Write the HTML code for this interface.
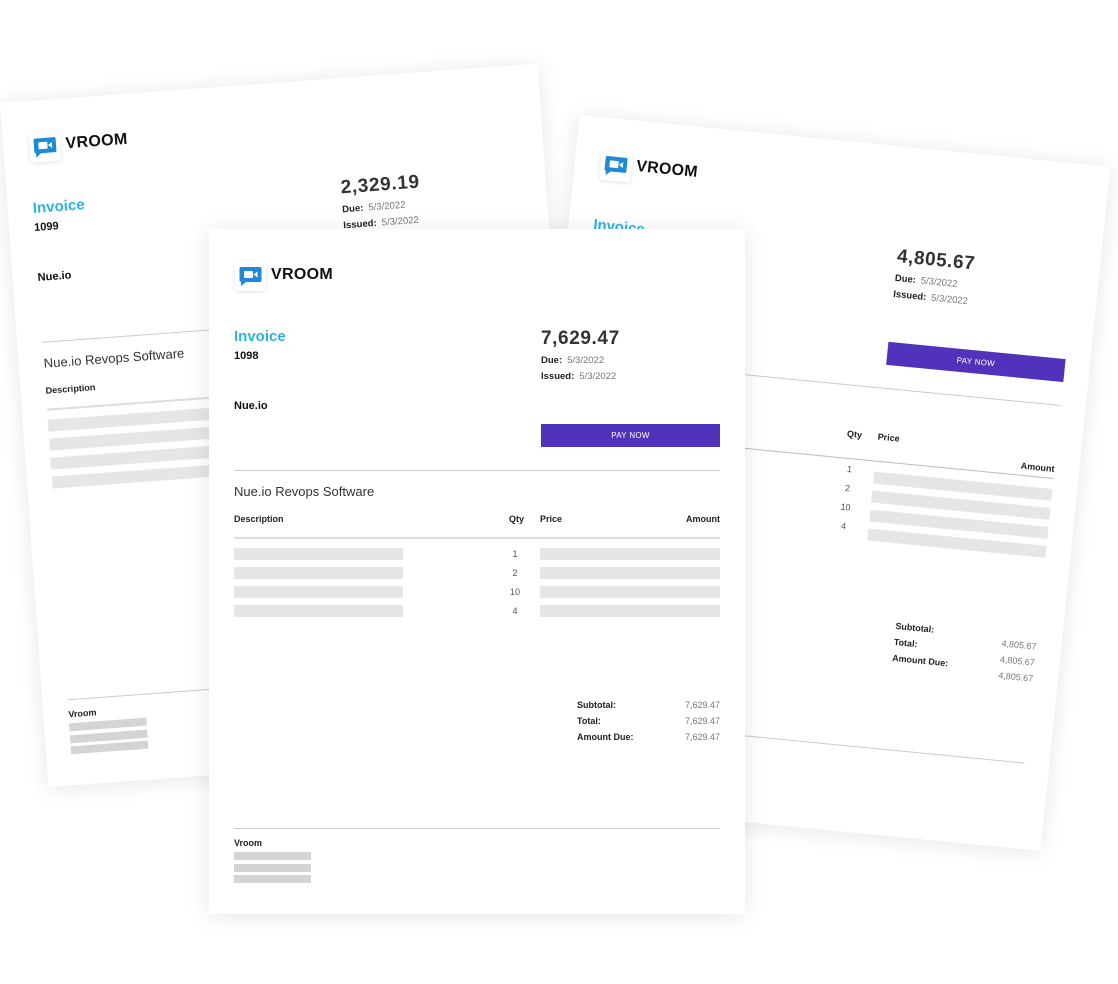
<!DOCTYPE html>
<html><head><meta charset="utf-8"><style>
*{margin:0;padding:0;box-sizing:border-box}
body{width:1118px;height:984px;background:#fff;position:relative;overflow:hidden;font-family:"Liberation Sans",sans-serif;color:#222}
.card{position:absolute;left:0;top:0;width:536px;height:685px;background:#fff;transform-origin:0 0;box-shadow:0 2px 22px rgba(0,0,0,0.10)}
.card *{position:absolute}
.card b{position:static}
.logo{left:26px;top:33px;width:31px;height:29px;background:#fff;border-radius:3px;box-shadow:0 1px 4px rgba(0,0,0,0.12)}
.logo svg{left:4px;top:4px}
.brand{left:62px;top:37px;font-size:16px;font-weight:bold;color:#111;letter-spacing:0.3px}
.inv{left:25px;top:99px;font-size:15px;font-weight:bold;color:#2ab4e6}
.num{left:25px;top:121px;font-size:11px;font-weight:bold;color:#111}
.cust{left:25px;top:171px;font-size:11px;font-weight:bold;color:#111}
.price{left:332px;top:99px;font-size:19px;font-weight:bold;color:#333;letter-spacing:0.6px}
.due{left:332px;top:126px;font-size:9.5px;color:#777;white-space:nowrap}
.iss{left:332px;top:142px;font-size:9.5px;color:#777;white-space:nowrap}
.due b,.iss b{color:#222;margin-right:5px}
.btn{left:332px;top:195px;width:179px;height:23px;background:#5133bb;color:#fff;font-size:8px;text-align:center;line-height:23px;letter-spacing:0.3px}
.hr{left:25px;width:486px;height:1px;background:#ccc}
.title{left:25px;top:255px;font-size:13px;color:#333}
.h{top:285px;font-size:9px;font-weight:bold;color:#222}
.bar{height:12px;background:#e6e6e6}
.q{font-size:9px;color:#555;width:20px;text-align:center;left:296px}
.tl{left:368px;font-size:9px;font-weight:bold;color:#222}
.tv{right:25px;font-size:9px;color:#777;text-align:right}
.fb{left:25px;width:77px;height:8px;background:#d4d4d4}
</style></head><body>

<div class="card" style="transform:matrix(1.0024,-0.0738,0.0703,0.9987,0.2,103)">
<div class="logo"><svg width="23" height="21" viewBox="0 0 23 21"><path d="M2 1h19a1.5 1.5 0 0 1 1.5 1.5v12a1.5 1.5 0 0 1-1.5 1.5H7l-5 4v-4.2A1.5 1.5 0 0 1 .5 14.5v-12A1.5 1.5 0 0 1 2 1z" fill="#1e8ad6"/><rect x="5" y="5" width="9" height="7" rx="1" fill="#fff"/><path d="M14.5 8.5l4-3v6z" fill="#fff"/></svg></div>
<div class="brand">VROOM</div><div class="inv">Invoice</div><div class="num">1099</div><div class="cust">Nue.io</div>
<div class="price">2,329.19</div><div class="due"><b>Due:</b>5/3/2022</div><div class="iss"><b>Issued:</b>5/3/2022</div>
<div class="btn">PAY NOW</div><div class="hr" style="top:241px"></div><div class="title">Nue.io Revops Software</div>
<div class="h" style="left:25px">Description</div><div class="h" style="left:300px">Qty</div><div class="h" style="left:331px">Price</div><div class="h" style="right:25px">Amount</div>
<div class="hr" style="top:308px;height:2px;background:#ddd"></div>
<div class="bar" style="left:25px;top:319px;width:169px"></div><div class="bar" style="left:25px;top:338px;width:169px"></div><div class="bar" style="left:25px;top:357px;width:169px"></div><div class="bar" style="left:25px;top:376px;width:169px"></div>
<div class="bar" style="left:331px;top:319px;width:180px"></div><div class="bar" style="left:331px;top:338px;width:180px"></div><div class="bar" style="left:331px;top:357px;width:180px"></div><div class="bar" style="left:331px;top:376px;width:180px"></div>
<div class="q" style="top:320px">1</div><div class="q" style="top:339px">2</div><div class="q" style="top:358px">10</div><div class="q" style="top:377px">4</div>
<div class="tl" style="top:471px">Subtotal:</div><div class="tl" style="top:487px">Total:</div><div class="tl" style="top:503px">Amount Due:</div>
<div class="tv" style="top:471px">2,329.19</div><div class="tv" style="top:487px">2,329.19</div><div class="tv" style="top:503px">2,329.19</div>
<div class="hr" style="top:599px"></div><div class="h" style="left:25px;top:609px">Vroom</div>
<div class="fb" style="top:623px"></div><div class="fb" style="top:635px"></div><div class="fb" style="top:646px"></div>
</div>

<div class="card" style="transform:matrix(0.990,0.0966,-0.1017,0.9987,579.6,115)">
<div class="logo"><svg width="23" height="21" viewBox="0 0 23 21"><path d="M2 1h19a1.5 1.5 0 0 1 1.5 1.5v12a1.5 1.5 0 0 1-1.5 1.5H7l-5 4v-4.2A1.5 1.5 0 0 1 .5 14.5v-12A1.5 1.5 0 0 1 2 1z" fill="#1e8ad6"/><rect x="5" y="5" width="9" height="7" rx="1" fill="#fff"/><path d="M14.5 8.5l4-3v6z" fill="#fff"/></svg></div>
<div class="brand">VROOM</div><div class="inv">Invoice</div><div class="num">1097</div><div class="cust">Nue.io</div>
<div class="price">4,805.67</div><div class="due"><b>Due:</b>5/3/2022</div><div class="iss"><b>Issued:</b>5/3/2022</div>
<div class="btn">PAY NOW</div><div class="hr" style="top:241px"></div><div class="title">Nue.io Revops Software</div>
<div class="h" style="left:25px">Description</div><div class="h" style="left:300px">Qty</div><div class="h" style="left:331px">Price</div><div class="h" style="right:25px;top:300px">Amount</div>
<div class="hr" style="top:314px;height:1px;background:#bbb"></div>
<div class="bar" style="left:25px;top:325px;width:169px"></div><div class="bar" style="left:25px;top:344px;width:169px"></div><div class="bar" style="left:25px;top:363px;width:169px"></div><div class="bar" style="left:25px;top:382px;width:169px"></div>
<div class="bar" style="left:331px;top:325px;width:180px"></div><div class="bar" style="left:331px;top:344px;width:180px"></div><div class="bar" style="left:331px;top:363px;width:180px"></div><div class="bar" style="left:331px;top:382px;width:180px"></div>
<div class="q" style="top:320px">1</div><div class="q" style="top:339px">2</div><div class="q" style="top:358px">10</div><div class="q" style="top:377px">4</div>
<div class="tl" style="top:471px">Subtotal:</div><div class="tl" style="top:487px">Total:</div><div class="tl" style="top:503px">Amount Due:</div>
<div class="tv" style="top:478px">4,805.67</div><div class="tv" style="top:494px">4,805.67</div><div class="tv" style="top:510px">4,805.67</div>
<div class="hr" style="top:599px"></div><div class="h" style="left:25px;top:609px">Vroom</div>
<div class="fb" style="top:623px"></div><div class="fb" style="top:635px"></div><div class="fb" style="top:646px"></div>
</div>

<div class="card" style="transform:translate(209px,229px)">
<div class="logo"><svg width="23" height="21" viewBox="0 0 23 21"><path d="M2 1h19a1.5 1.5 0 0 1 1.5 1.5v12a1.5 1.5 0 0 1-1.5 1.5H7l-5 4v-4.2A1.5 1.5 0 0 1 .5 14.5v-12A1.5 1.5 0 0 1 2 1z" fill="#1e8ad6"/><rect x="5" y="5" width="9" height="7" rx="1" fill="#fff"/><path d="M14.5 8.5l4-3v6z" fill="#fff"/></svg></div>
<div class="brand">VROOM</div><div class="inv">Invoice</div><div class="num">1098</div><div class="cust">Nue.io</div>
<div class="price">7,629.47</div><div class="due"><b>Due:</b>5/3/2022</div><div class="iss"><b>Issued:</b>5/3/2022</div>
<div class="btn">PAY NOW</div><div class="hr" style="top:241px"></div><div class="title">Nue.io Revops Software</div>
<div class="h" style="left:25px">Description</div><div class="h" style="left:300px">Qty</div><div class="h" style="left:331px">Price</div><div class="h" style="right:25px">Amount</div>
<div class="hr" style="top:308px;height:2px;background:#ddd"></div>
<div class="bar" style="left:25px;top:319px;width:169px"></div><div class="bar" style="left:25px;top:338px;width:169px"></div><div class="bar" style="left:25px;top:357px;width:169px"></div><div class="bar" style="left:25px;top:376px;width:169px"></div>
<div class="bar" style="left:331px;top:319px;width:180px"></div><div class="bar" style="left:331px;top:338px;width:180px"></div><div class="bar" style="left:331px;top:357px;width:180px"></div><div class="bar" style="left:331px;top:376px;width:180px"></div>
<div class="q" style="top:320px">1</div><div class="q" style="top:339px">2</div><div class="q" style="top:358px">10</div><div class="q" style="top:377px">4</div>
<div class="tl" style="top:471px">Subtotal:</div><div class="tl" style="top:487px">Total:</div><div class="tl" style="top:503px">Amount Due:</div>
<div class="tv" style="top:471px">7,629.47</div><div class="tv" style="top:487px">7,629.47</div><div class="tv" style="top:503px">7,629.47</div>
<div class="hr" style="top:599px"></div><div class="h" style="left:25px;top:609px">Vroom</div>
<div class="fb" style="top:623px"></div><div class="fb" style="top:635px"></div><div class="fb" style="top:646px"></div>
</div>
</body></html>
